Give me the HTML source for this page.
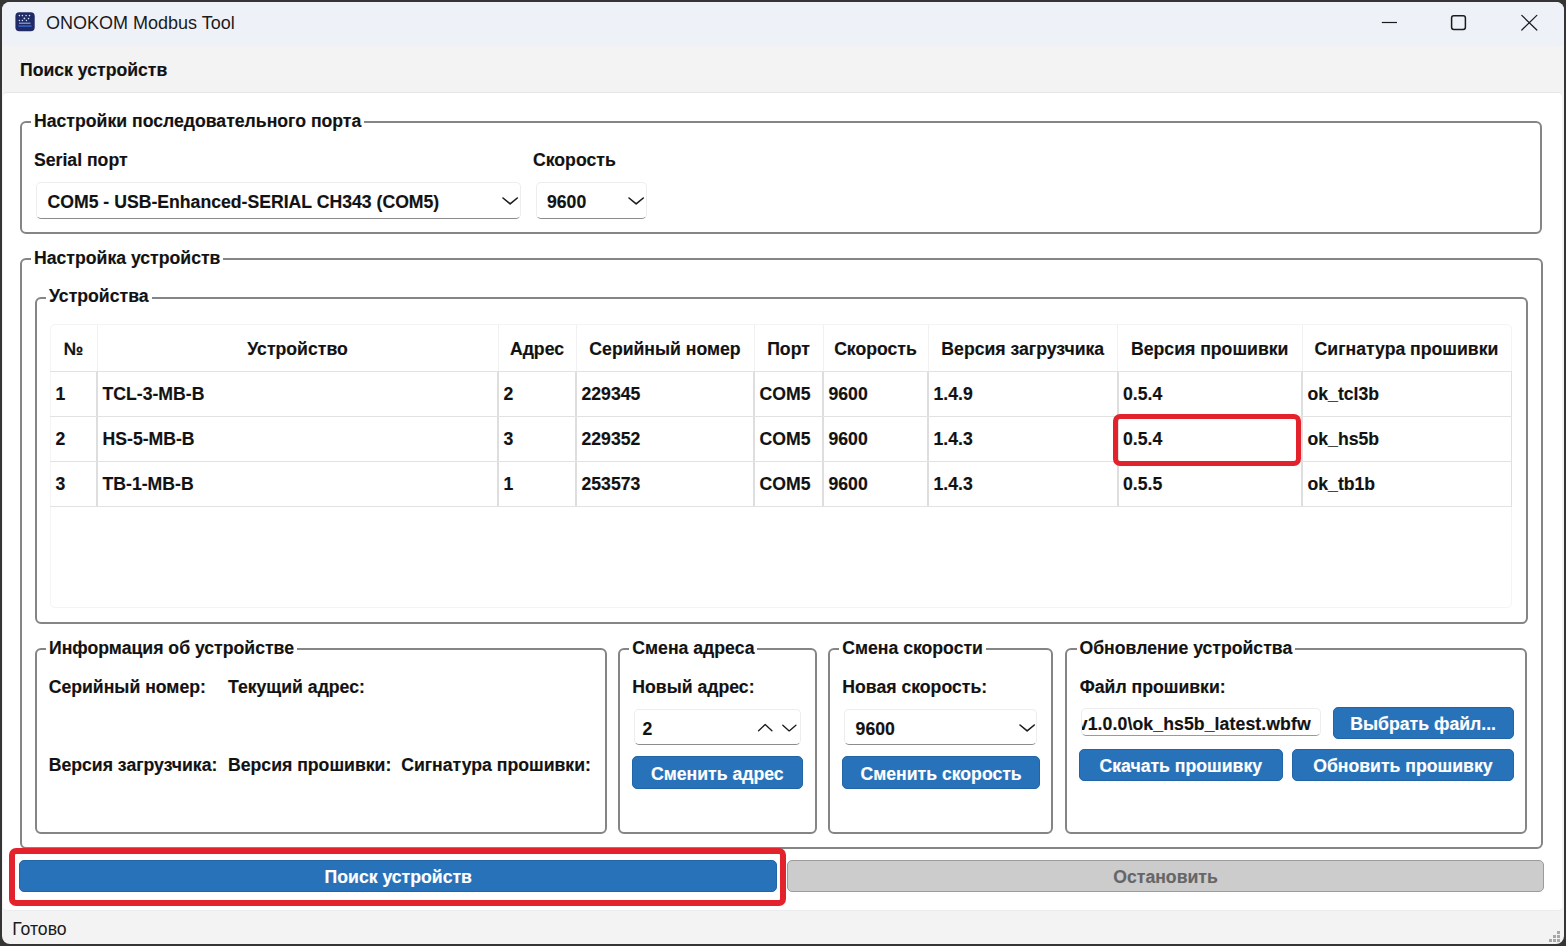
<!DOCTYPE html>
<html><head><meta charset="utf-8">
<style>
*{box-sizing:border-box}
html,body{margin:0;padding:0}
body{width:1566px;height:946px;overflow:hidden;background:#353535;position:relative;font-family:"Liberation Sans",sans-serif;color:#121212}
.a{position:absolute}
.t{position:absolute;white-space:nowrap;line-height:20px;font-size:17.65px;font-weight:bold;-webkit-text-stroke:0.15px currentColor}
.gb{position:absolute;border:2px solid #858585}
.gt{position:absolute;background:#fff;padding:0 3px;white-space:nowrap;line-height:20px;font-size:17.65px;font-weight:bold;-webkit-text-stroke:0.15px currentColor}
.cb{position:absolute;background:#fff;border:1px solid #ededed;border-bottom:1.5px solid #8c8c8c;border-radius:5px}
.btn{position:absolute;background:#2872ba;border:1px solid #2265a6;border-radius:5px}
</style></head><body>
<div class="a" style="left:2px;top:1.75px;width:1561.75px;height:941.85px;background:#f3f3f3;border-radius:8px;overflow:hidden"><div class="a" style="left:0;top:0;width:100%;height:44.5px;background:#eef2f8"></div><div class="a" style="left:1px;top:90.25px;width:1559.25px;height:818.5px;background:#fff;border-top:1px solid #e6e6e6;border-bottom:1px solid #ececec;border-radius:4px"></div></div>
<svg class="a" style="left:15px;top:12px" width="20" height="20" viewBox="0 0 20 20">
<rect x="0.4" y="0.3" width="19.3" height="19" rx="4" fill="#1f2a66"/>
<g fill="#cfe0ff"><circle cx="4.4" cy="3.6" r="0.8"/><circle cx="7.4" cy="3.6" r="0.8"/><circle cx="11.1" cy="3.6" r="0.8"/><circle cx="14.5" cy="3.6" r="0.8"/>
<circle cx="9.4" cy="6.4" r="0.9"/><circle cx="13.5" cy="6.6" r="0.8"/>
<circle cx="4.4" cy="8.5" r="0.8"/><circle cx="7.4" cy="8.5" r="0.8"/><circle cx="11.4" cy="8.5" r="0.8"/></g>
<rect x="4" y="10.6" width="11.5" height="1.2" fill="#8ea6d8"/>
<rect x="3.5" y="13.4" width="13" height="1.3" fill="#3d6fd6"/>
</svg>
<div class="t" style="left:46px;top:12.56px;font-size:18px;font-weight:normal;color:#1b1b1b;-webkit-text-stroke:0;">ONOKOM Modbus Tool</div>
<svg class="a" style="left:1370px;top:5px" width="180" height="40" viewBox="0 0 180 40">
 <line x1="11.8" y1="17.5" x2="27" y2="17.5" stroke="#1b1b1b" stroke-width="1.2"/>
 <rect x="81.6" y="10.7" width="13.8" height="13.8" rx="2.2" fill="none" stroke="#1b1b1b" stroke-width="1.5"/>
 <path d="M151.8 10.4 L166.8 25 M166.8 10.4 L151.8 25" stroke="#1b1b1b" stroke-width="1.25" stroke-linecap="round"/>
</svg>
<div class="t" style="left:20px;top:59.88px;font-size:17.65px;">Поиск устройств</div>
<div class="gb" style="left:20.00px;top:121.00px;width:1522.40px;height:112.60px;border-radius:6px"></div><div class="gt" style="left:31px;top:110.68px">Настройки последовательного порта</div>
<div class="t" style="left:34px;top:149.88px;font-size:17.65px;">Serial порт</div>
<div class="t" style="left:533px;top:149.88px;font-size:17.65px;">Скорость</div>
<div class="cb" style="left:36px;top:182px;width:485px;height:36.5px"></div>
<div class="t" style="left:47.5px;top:191.68px;font-size:17.65px;">COM5 - USB-Enhanced-SERIAL CH343 (COM5)</div>
<svg class="a" style="left:501.4px;top:196.3px" width="18.3" height="9.9"><path d="M2 2 L9.15 7.9 L16.3 2" fill="none" stroke="#1b1b1b" stroke-width="1.6" stroke-linecap="round" stroke-linejoin="round"/></svg>
<div class="cb" style="left:535.5px;top:182px;width:111.5px;height:36.5px"></div>
<div class="t" style="left:547px;top:191.68px;font-size:17.65px;">9600</div>
<svg class="a" style="left:627.4px;top:196.3px" width="18.3" height="9.9"><path d="M2 2 L9.15 7.9 L16.3 2" fill="none" stroke="#1b1b1b" stroke-width="1.6" stroke-linecap="round" stroke-linejoin="round"/></svg>
<div class="gb" style="left:20.00px;top:257.70px;width:1522.75px;height:591.10px;border-radius:6px"></div><div class="gt" style="left:31px;top:247.58px">Настройка устройств</div>
<div class="gb" style="left:35.00px;top:296.60px;width:1492.50px;height:327.20px;border-radius:6px"></div><div class="gt" style="left:46px;top:285.88px">Устройства</div>
<div class="a" style="left:50px;top:324px;width:1462px;height:284px;border:1.5px solid #f4f4f4;border-radius:5px"></div>
<div class="a" style="left:96.5px;top:324px;width:1px;height:47px;background:#f1f1f1"></div>
<div class="a" style="left:96px;top:371px;width:2px;height:135px;background:#dedede"></div>
<div class="a" style="left:497.5px;top:324px;width:1px;height:47px;background:#f1f1f1"></div>
<div class="a" style="left:497px;top:371px;width:2px;height:135px;background:#dedede"></div>
<div class="a" style="left:575.5px;top:324px;width:1px;height:47px;background:#f1f1f1"></div>
<div class="a" style="left:575px;top:371px;width:2px;height:135px;background:#dedede"></div>
<div class="a" style="left:753.5px;top:324px;width:1px;height:47px;background:#f1f1f1"></div>
<div class="a" style="left:753px;top:371px;width:2px;height:135px;background:#dedede"></div>
<div class="a" style="left:822.5px;top:324px;width:1px;height:47px;background:#f1f1f1"></div>
<div class="a" style="left:822px;top:371px;width:2px;height:135px;background:#dedede"></div>
<div class="a" style="left:927.5px;top:324px;width:1px;height:47px;background:#f1f1f1"></div>
<div class="a" style="left:927px;top:371px;width:2px;height:135px;background:#dedede"></div>
<div class="a" style="left:1117.0px;top:324px;width:1px;height:47px;background:#f1f1f1"></div>
<div class="a" style="left:1116.5px;top:371px;width:2px;height:135px;background:#dedede"></div>
<div class="a" style="left:1301.5px;top:324px;width:1px;height:47px;background:#f1f1f1"></div>
<div class="a" style="left:1301px;top:371px;width:2px;height:135px;background:#dedede"></div>
<div class="a" style="left:1510.5px;top:371px;width:1.5px;height:135px;background:#e0e0e0"></div>
<div class="a" style="left:50px;top:370.5px;width:1462px;height:1px;background:#e2e2e2"></div>
<div class="a" style="left:50px;top:415.5px;width:1462px;height:1px;background:#e2e2e2"></div>
<div class="a" style="left:50px;top:460.5px;width:1462px;height:1px;background:#e2e2e2"></div>
<div class="a" style="left:50px;top:505.5px;width:1462px;height:1px;background:#e2e2e2"></div>
<div class="t" style="left:50px;width:47px;text-align:center;top:338.88px;font-size:17.65px;">№</div>
<div class="t" style="left:97px;width:401px;text-align:center;top:338.88px;font-size:17.65px;">Устройство</div>
<div class="t" style="left:498px;width:78px;text-align:center;top:338.88px;font-size:17.65px;">Адрес</div>
<div class="t" style="left:576px;width:178px;text-align:center;top:338.88px;font-size:17.65px;">Серийный номер</div>
<div class="t" style="left:754px;width:69px;text-align:center;top:338.88px;font-size:17.65px;">Порт</div>
<div class="t" style="left:823px;width:105px;text-align:center;top:338.88px;font-size:17.65px;">Скорость</div>
<div class="t" style="left:928px;width:189.5px;text-align:center;top:338.88px;font-size:17.65px;">Версия загрузчика</div>
<div class="t" style="left:1117.5px;width:184.5px;text-align:center;top:338.88px;font-size:17.65px;">Версия прошивки</div>
<div class="t" style="left:1302px;width:209px;text-align:center;top:338.88px;font-size:17.65px;">Сигнатура прошивки</div>
<div class="t" style="left:55.5px;top:384.18px;font-size:17.65px;">1</div>
<div class="t" style="left:102.5px;top:384.18px;font-size:17.65px;">TCL-3-MB-B</div>
<div class="t" style="left:503.5px;top:384.18px;font-size:17.65px;">2</div>
<div class="t" style="left:581.5px;top:384.18px;font-size:17.65px;">229345</div>
<div class="t" style="left:759.5px;top:384.18px;font-size:17.65px;">COM5</div>
<div class="t" style="left:828.5px;top:384.18px;font-size:17.65px;">9600</div>
<div class="t" style="left:933.5px;top:384.18px;font-size:17.65px;">1.4.9</div>
<div class="t" style="left:1123.0px;top:384.18px;font-size:17.65px;">0.5.4</div>
<div class="t" style="left:1307.5px;top:384.18px;font-size:17.65px;">ok_tcl3b</div>
<div class="t" style="left:55.5px;top:429.18px;font-size:17.65px;">2</div>
<div class="t" style="left:102.5px;top:429.18px;font-size:17.65px;">HS-5-MB-B</div>
<div class="t" style="left:503.5px;top:429.18px;font-size:17.65px;">3</div>
<div class="t" style="left:581.5px;top:429.18px;font-size:17.65px;">229352</div>
<div class="t" style="left:759.5px;top:429.18px;font-size:17.65px;">COM5</div>
<div class="t" style="left:828.5px;top:429.18px;font-size:17.65px;">9600</div>
<div class="t" style="left:933.5px;top:429.18px;font-size:17.65px;">1.4.3</div>
<div class="t" style="left:1123.0px;top:429.18px;font-size:17.65px;">0.5.4</div>
<div class="t" style="left:1307.5px;top:429.18px;font-size:17.65px;">ok_hs5b</div>
<div class="t" style="left:55.5px;top:474.18px;font-size:17.65px;">3</div>
<div class="t" style="left:102.5px;top:474.18px;font-size:17.65px;">TB-1-MB-B</div>
<div class="t" style="left:503.5px;top:474.18px;font-size:17.65px;">1</div>
<div class="t" style="left:581.5px;top:474.18px;font-size:17.65px;">253573</div>
<div class="t" style="left:759.5px;top:474.18px;font-size:17.65px;">COM5</div>
<div class="t" style="left:828.5px;top:474.18px;font-size:17.65px;">9600</div>
<div class="t" style="left:933.5px;top:474.18px;font-size:17.65px;">1.4.3</div>
<div class="t" style="left:1123.0px;top:474.18px;font-size:17.65px;">0.5.5</div>
<div class="t" style="left:1307.5px;top:474.18px;font-size:17.65px;">ok_tb1b</div>
<div class="a" style="left:1112.6px;top:414px;width:188.6px;height:51.7px;border:5.7px solid #e3222b;border-radius:7px"></div>
<div class="gb" style="left:34.60px;top:647.60px;width:572.15px;height:186.40px;border-radius:6px"></div><div class="gt" style="left:46px;top:637.88px">Информация об устройстве</div>
<div class="t" style="left:48.7px;top:677.08px;font-size:17.65px;">Серийный номер:</div>
<div class="t" style="left:228px;top:677.08px;font-size:17.65px;">Текущий адрес:</div>
<div class="t" style="left:48.7px;top:754.88px;font-size:17.65px;">Версия загрузчика:</div>
<div class="t" style="left:228px;top:754.88px;font-size:17.65px;">Версия прошивки:</div>
<div class="t" style="left:401.2px;top:754.88px;font-size:17.65px;">Сигнатура прошивки:</div>
<div class="gb" style="left:618.10px;top:647.60px;width:198.50px;height:186.40px;border-radius:6px"></div><div class="gt" style="left:629.3px;top:637.88px">Смена адреса</div>
<div class="t" style="left:632.3px;top:677.08px;font-size:17.65px;">Новый адрес:</div>
<div class="cb" style="left:634px;top:708.7px;width:167px;height:36.799999999999955px"></div>
<div class="t" style="left:642.6px;top:718.88px;font-size:17.65px;">2</div>
<svg class="a" style="left:756px;top:721px" width="44" height="12"><path d="M2.6 9.7 L9.2 3.5 L15.9 9.7 M26.8 4.2 L33.2 9.9 L39.9 4.2" fill="none" stroke="#1b1b1b" stroke-width="1.35" stroke-linecap="round" stroke-linejoin="round"/></svg>
<div class="btn" style="left:632px;top:756.3px;width:170.70000000000005px;height:32.30000000000007px"><div class="t" style="left:0;right:0;text-align:center;top:7.08px;color:#fff">Сменить адрес</div></div>
<div class="gb" style="left:827.80px;top:647.60px;width:225.70px;height:186.40px;border-radius:6px"></div><div class="gt" style="left:839.2px;top:637.88px">Смена скорости</div>
<div class="t" style="left:842.3px;top:677.08px;font-size:17.65px;">Новая скорость:</div>
<div class="cb" style="left:844.4px;top:708.7px;width:192.80000000000007px;height:36.799999999999955px"></div>
<div class="t" style="left:855.6px;top:718.88px;font-size:17.65px;">9600</div>
<svg class="a" style="left:1017.6px;top:723px" width="18.3" height="9.9"><path d="M2 2 L9.15 7.9 L16.3 2" fill="none" stroke="#1b1b1b" stroke-width="1.6" stroke-linecap="round" stroke-linejoin="round"/></svg>
<div class="btn" style="left:842.4px;top:756.3px;width:197.39999999999998px;height:32.30000000000007px"><div class="t" style="left:0;right:0;text-align:center;top:7.08px;color:#fff">Сменить скорость</div></div>
<div class="gb" style="left:1065.00px;top:647.60px;width:462.30px;height:186.40px;border-radius:6px"></div><div class="gt" style="left:1076.5px;top:637.88px">Обновление устройства</div>
<div class="t" style="left:1079.7px;top:677.18px;font-size:17.65px;">Файл прошивки:</div>
<div class="cb" style="left:1081.3px;top:708.4px;width:239.5px;height:28px;overflow:hidden;border-bottom:1px solid #9a9a9a"><div class="t" style="right:9px;top:4.4px;letter-spacing:0.1px">v1.0.0\ok_hs5b_latest.wbfw</div></div>
<div class="btn" style="left:1332.7px;top:707.4px;width:180.89999999999986px;height:31.300000000000068px"><div class="t" style="left:0;right:0;text-align:center;top:5.28px;color:#fff">Выбрать файл...</div></div>
<div class="btn" style="left:1079px;top:749.3px;width:203.5999999999999px;height:31.600000000000023px"><div class="t" style="left:0;right:0;text-align:center;top:5.38px;color:#fff">Скачать прошивку</div></div>
<div class="btn" style="left:1292.2px;top:749.3px;width:221.39999999999986px;height:31.600000000000023px"><div class="t" style="left:0;right:0;text-align:center;top:5.38px;color:#fff">Обновить прошивку</div></div>
<div class="btn" style="left:19.2px;top:860px;width:758.1999999999999px;height:32.200000000000045px"><div class="t" style="left:0;right:0;text-align:center;top:5.68px;color:#fff">Поиск устройств</div></div>
<div class="a" style="left:787.4px;top:860.2px;width:756.3px;height:32px;background:#cccccc;border:1.5px solid #9b9b9b;border-radius:5px"></div>
<div class="t" style="left:787.4px;width:756.3000000000001px;text-align:center;top:866.68px;font-size:17.65px;color:#666666;">Остановить</div>
<div class="a" style="left:8.7px;top:847.5px;width:777px;height:58.4px;border:6px solid #e3222b;border-radius:7px"></div>
<div class="t" style="left:12.2px;top:918.68px;font-size:17.65px;font-weight:normal;color:#1b1b1b;-webkit-text-stroke:0;">Готово</div>
<div class="a" style="left:1557px;top:931px;width:3px;height:3px;background:#a8a8a8"></div>
<div class="a" style="left:1553px;top:935px;width:3px;height:3px;background:#a8a8a8"></div>
<div class="a" style="left:1557px;top:935px;width:3px;height:3px;background:#a8a8a8"></div>
<div class="a" style="left:1549px;top:939px;width:3px;height:3px;background:#a8a8a8"></div>
<div class="a" style="left:1553px;top:939px;width:3px;height:3px;background:#a8a8a8"></div>
<div class="a" style="left:1557px;top:939px;width:3px;height:3px;background:#a8a8a8"></div>
</body></html>
